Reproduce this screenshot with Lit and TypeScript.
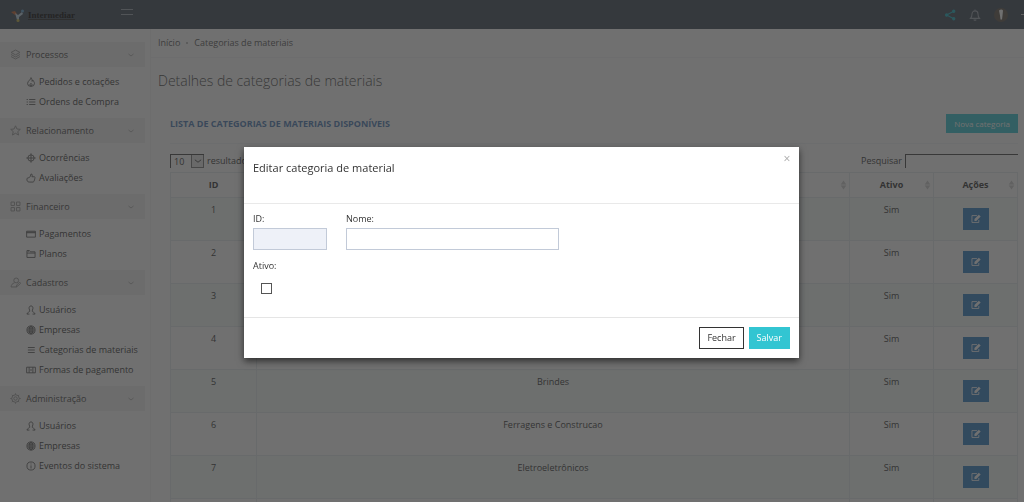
import { LitElement, html, svg, css, TemplateResult } from "lit";
import { customElement, property } from "lit/decorators.js";

const icons: Record<string, TemplateResult> = {
  layers: svg`<path d="M8 1.500 14.500 5 8 8.500 1.500 5z M1.500 8 8 11.500 14.500 8 M1.500 11 8 14.500 14.500 11"/>`,
  star: svg`<path d="M8 1.200 10.100 5.800 15 6.300 11.300 9.600 12.400 14.600 8 12 3.600 14.600 4.700 9.600 1 6.300 5.900 5.800z"/>`,
  grid: svg`<path d="M1.500 1.500h5v5h-5z M9.500 1.500h5v5h-5z M1.500 9.500h5v5h-5z M9.500 9.500h5v5h-5z"/>`,
  userEdit: svg`<circle cx="9" cy="5" r="3.500"/><path d="M6.500 8.500C3.500 9.500 2 11 1.500 14.500h8 M9 14.500l1-3 4-4 1.500 1.500-4 4z"/>`,
  gear: svg`<circle cx="8" cy="8" r="2.500"/><circle cx="8" cy="8" r="5.500"/><path d="M8 .5v2 M8 13.500v2 M.5 8h2 M13.500 8h2 M2.700 2.700l1.400 1.400 M11.900 11.900l1.400 1.400 M2.700 13.300l1.400-1.400 M11.900 4.100l1.400-1.400"/>`,
  fire: svg`<path d="M8 1c.5 3-5.500 5-5.500 9.500a5.500 4.500 0 0 0 11 0C13.500 8 12 7 11 5 10.500 6.500 10 7 9.500 7 10 5 9.500 3 8 1z M8 14.500c-2.500-1-2-3 0-4.500 2 1.500 2.500 3.500 0 4.500"/>`,
  list: svg`<path d="M1 4h2 M5 4h10 M1 8h2 M5 8h10 M1 12h2 M5 12h10"/>`,
  target: svg`<circle cx="8" cy="8" r="5"/><path d="M8 .5v15 M.5 8h15"/>`,
  like: svg`<path d="M4.500 7.500 7 5.500 8 1.500c2 0 2.500 2 1.500 4.500h4c1.500 1 1 2 .5 3-.5 2.500-1 5-2.500 5.500H6c-3 0-4-1-4.500-3.500s1-3.500 3-3.500z"/>`,
  card: svg`<path d="M1 3.500h14v9.500H1z M1 6h14"/><path d="M1 5h14"/>`,
  folder: svg`<path d="M1.500 13.500v-11h4l1.500 2h7.500v9z M3.500 4.500V2 M1.500 6.500h13"/>`,
  user: svg`<path d="M8 1.500c-2.500 0-3.500 2-3 4.500.3 2 1.300 2.500 1 4-.5 1.500-4 1.500-4.500 4.500h4 M8 1.500c2.500 0 3.500 2 3 4.500-.3 2-1.300 2.500-1 4 .5 1.500 4 1.500 4.500 4.500h-4"/>`,
  globe: svg`<circle cx="8" cy="8" r="6.500"/><ellipse cx="8" cy="8" rx="3" ry="6.500"/><path d="M1.500 8h13 M8 1.500v13 M2.500 5h11 M2.500 11h11"/>`,
  menu: svg`<path d="M3 4h11 M3 8h11 M3 12h11"/>`,
  cash: svg`<path d="M1 3.500h14v9H1z M5 3.500v9 M11 3.500v9 M8 6.500v3"/>`,
  info: svg`<circle cx="8" cy="8" r="6.500"/><path d="M8 7v5 M8 4v1.500"/>`,
  down: svg`<path d="M3 6l5 4 5-4"/>`,
  bell: svg`<path d="M2 12.500h12c-1.500-1.500-2-3-2-6a4 4 0 0 0-8 0c0 3-.5 4.500-2 6z M8 .800v1.700 M6.500 14c.5 1.500 2.500 1.500 3 0"/>`,
  share: svg`<path d="M13 3 3.500 8 13 13"/><circle cx="13" cy="3" r="1.500" fill="currentColor"/><circle cx="3.500" cy="8" r="1.500" fill="currentColor"/><circle cx="13" cy="13" r="1.500" fill="currentColor"/>`,
  edit: svg`<path d="M12.500 9.500v4h-11v-11h8"/><path fill="currentColor" stroke="none" d="M5.500 11V8L12.500 1l3 3-7 7z"/>`,
  sort: svg`<path fill="currentColor" stroke="none" d="M8 0l5 7H3z M8 16l5-7H3z"/>`,
};

@customElement("ui-icon")
class UiIcon extends LitElement {
  @property() name = "";
  static styles = css`
    :host { display: inline-flex; width: 10px; height: 10px; flex: none; }
    svg { width: 100%; height: 100%; fill: none; stroke: currentColor; stroke-width: 1.4; }
  `;
  render() {
    return html`<svg viewBox="0 0 16 16" aria-hidden="true">${icons[this.name]}</svg>`;
  }
}

const groups = [
  { icon: "layers", label: "Processos", items: [["fire", "Pedidos e cotações"], ["list", "Ordens de Compra"]] },
  { icon: "star", label: "Relacionamento", items: [["target", "Ocorrências"], ["like", "Avaliações"]] },
  { icon: "grid", label: "Financeiro", items: [["card", "Pagamentos"], ["folder", "Planos"]] },
  { icon: "userEdit", label: "Cadastros", items: [["user", "Usuários"], ["globe", "Empresas"], ["menu", "Categorias de materiais"], ["cash", "Formas de pagamento"]] },
  { icon: "gear", label: "Administração", items: [["user", "Usuários"], ["globe", "Empresas"], ["info", "Eventos do sistema"]] },
];

const rows = [
  [1, ""], [2, ""], [3, ""], [4, ""],
  [5, "Brindes"], [6, "Ferragens e Construcao"], [7, "Eletroeletrônicos"],
];

@customElement("app-root")
class AppRoot extends LitElement {
  static styles = css`
    :host { display: block; font-family: "Open Sans", sans-serif; font-size: 9px; line-height: 12px; color: #333; }
    * { box-sizing: border-box; }
    button, input, select { font: inherit; color: inherit; border-radius: 0; margin: 0; }
    a { color: inherit; text-decoration: none; }
    .page { height: 100vh; overflow: hidden; display: flex; flex-direction: column; background: #fff; }
    .top { height: 29px; flex: none; display: flex; align-items: center; background: #3b4655; padding-left: 10px; color: #98a0ab; }
    .brand { display: flex; align-items: center; gap: 3px; width: 111px; color: #000; padding-top: 2px; }
    .brand svg { width: 15px; height: 13px; }
    .words { display: flex; flex-direction: column; font-family: "Liberation Serif", serif; font-weight: bold; font-size: 9px; line-height: 8px; }
    .rule { height: 1px; background: #222; }
    .burger { width: 12px; height: 6px; padding: 0; background: none; border: solid #98a0ab; border-width: 1px 0; margin-bottom: 6px; }
    .tools { margin-left: auto; display: flex; align-items: center; gap: 13px; }
    .tools ui-icon { width: 12px; height: 12px; }
    .share { color: #18b0c0; }
    .avatar { width: 14px; height: 14px; }
    .caret { width: 3px; height: 1px; background: #ccc; }
    .body { flex: 1; min-height: 0; display: flex; }
    .side { width: 145px; flex: none; padding-top: 13px; }
    .group { display: flex; align-items: center; height: 25px; padding: 0 10px; gap: 5px; background: #f0f0f0; color: #444; }
    .group ui-icon { color: #999; width: 11px; height: 11px; }
    .group .chev { margin-left: auto; width: 8px; height: 8px; }
    .links { display: grid; grid-auto-rows: 20px; padding: 5px 0 6px 26px; }
    .links a { display: flex; align-items: center; gap: 3px; white-space: nowrap; }
    .links ui-icon { color: #555; }
    .main { flex: 1; min-width: 0; margin-left: 5px; border-left: 1px solid #f6f6f6; }
    .crumbs { height: 29px; display: flex; align-items: center; gap: 6px; padding: 0 7px; border-bottom: 1px solid #f4f6f8; color: #555; }
    .dot { width: 2px; height: 2px; background: #bbb; }
    h1 { margin: 0; padding: 11px 7px 0; font-size: 14px; line-height: 24px; font-weight: 300; color: #444; }
    .card { padding: 17px 6px 0 19px; }
    .cardhead { display: flex; align-items: flex-start; justify-content: space-between; padding-top: 4px; border-bottom: 1px solid #f1f4f8; height: 34px; }
    h2 { margin: 0; padding-top: 4px; font-size: 9px; line-height: 12px; font-weight: 700; color: #4a7ab5; text-transform: uppercase; }
    .new { height: 19px; border: 0; padding: 0 8px; background: #32c5d2; color: #fff; font-size: 8px; }
    .filter { display: flex; justify-content: space-between; height: 28px; padding-top: 10px; }
    .filter label { display: flex; align-items: center; gap: 3px; height: 14px; }
    .pick { display: grid; grid-template-columns: 20px 13px; height: 14px; border: solid #444; border-width: 1px 0 0 1px; }
    .pick select { grid-area: 1 / 1 / 2 / 3; appearance: none; border: 0; background: none; padding: 0 3px; width: 100%; }
    .pick span { grid-area: 1 / 2; display: grid; place-items: center; border: 1px solid #777; border-top: 0; background: #e8e8e8; pointer-events: none; }
    .filter input { width: 113px; height: 14px; border: solid #444; border-width: 1px 0 0 1px; background: none; outline: 0; }
    table { width: 100%; border-collapse: collapse; table-layout: fixed; text-align: center; }
    th, td { border: 1px solid #e3eaee; padding: 0; }
    th { height: 25px; font-weight: 700; }
    .th { display: grid; grid-template-columns: 10px 1fr 10px; align-items: center; }
    .th span { grid-column: 2; }
    .th ui-icon { width: 9px; color: #ccc; }
    td { height: 43px; vertical-align: top; padding-top: 6px; }
    tbody tr:nth-child(odd) { background: #f5fbf9; }
    .act { vertical-align: middle; padding: 0; }
    .edit { display: inline-grid; place-items: center; width: 26px; height: 22px; border: 0; padding: 0; background: #2f7fc4; color: #fff; vertical-align: middle; }
    .c1 { width: 86px; } .c3 { width: 84px; } .c4 { width: 84px; }
    .shade { position: fixed; inset: 0; background: rgba(51, 51, 51, 0.7); display: flex; justify-content: center; align-items: flex-start; padding: 147px 0 0 19px; }
    .modal { width: 555px; max-width: 100%; background: #fff; box-shadow: 0 3px 7px rgba(0, 0, 0, 0.6); color: #333; }
    .mhead { display: flex; justify-content: space-between; align-items: flex-start; height: 57px; padding: 6px 8px 0 9px; border-bottom: 1px solid #e9e9e9; }
    .mhead h3 { margin: 0; padding-top: 7px; font-size: 11px; line-height: 16px; font-weight: 400; }
    .x { border: 0; padding: 0; width: 8px; height: 12px; background: none; color: #aaa; font-size: 12px; line-height: 12px; }
    .form { display: grid; grid-template-columns: 74px 213px; column-gap: 19px; padding: 9px; height: 113px; align-content: start; }
    .field { display: flex; flex-direction: column; gap: 3px; }
    .field input[type="text"] { height: 22px; width: 100%; border: 1px solid #c2cad8; padding: 0 6px; outline: 0; background: #fff; }
    .field input[readonly] { background: #eef1f8 !important; }
    .field.second { padding-top: 10px; gap: 11px; }
    .check { appearance: none; width: 11px; height: 11px; border: 1px solid #555; background: #fff; margin-left: 8px; }
    .mfoot { display: flex; justify-content: flex-end; gap: 5px; padding: 9px; border-top: 1px solid #e5e5e5; }
    .btn { height: 22px; padding: 0 7px; border: 1px solid #32c5d2; background: #32c5d2; color: #fff; }
    .btn.plain { background: #fff; border-color: #333; color: #333; }
  `;

  render() {
    return html`
      <div class="page">
        <header class="top">
          <a class="brand" href="#">
            <svg viewBox="0 0 15 13" aria-hidden="true">
              <path d="M1 3l4-1 2 3-2 1z" fill="#c8602a"/><path d="M5 4l3 2 4-3 1 2-4 3v4l-2-1z" fill="#b8cfe0"/>
              <circle cx="12.500" cy="2" r="1.500" fill="#5fa0d0"/><circle cx="8" cy="11.500" r="1.500" fill="#c0b040"/>
            </svg>
            <span class="words">Intermediar<span class="rule"></span></span>
          </a>
          <button class="burger" aria-label="Menu"></button>
          <div class="tools">
            <ui-icon class="share" name="share"></ui-icon>
            <ui-icon name="bell"></ui-icon>
            <svg class="avatar" viewBox="0 0 14 14" aria-hidden="true">
              <circle cx="7" cy="7" r="7" fill="#5a5348"/><path d="M5 2.500q2.500-2 4 0l-.5 5-.5 4h-1.500l-.5-4z" fill="#fff"/>
            </svg>
            <span class="caret"></span>
          </div>
        </header>
        <div class="body">
          <nav class="side">
            ${groups.map((g) => html`
              <div class="group"><ui-icon name=${g.icon}></ui-icon>${g.label}<ui-icon class="chev" name="down"></ui-icon></div>
              <div class="links">${g.items.map(([i, t]) => html`<a href="#"><ui-icon name=${i}></ui-icon>${t}</a>`)}</div>
            `)}
          </nav>
          <main class="main">
            <div class="crumbs"><a href="#">Início</a><span class="dot"></span><span>Categorias de materiais</span></div>
            <h1>Detalhes de categorias de materiais</h1>
            <section class="card">
              <div class="cardhead"><h2>Lista de categorias de materiais disponíveis</h2><button class="new">Nova categoria</button></div>
              <div class="filter">
                <label><span class="pick"><select><option>10</option></select><span><ui-icon name="down"></ui-icon></span></span>resultados</label>
                <label>Pesquisar<input type="search"></label>
              </div>
              <table>
                <colgroup><col class="c1"><col><col class="c3"><col class="c4"></colgroup>
                <thead><tr>
                  ${["ID", "Nome", "Ativo", "Ações"].map((t) => html`<th><div class="th"><span>${t}</span>${t === "ID" ? "" : html`<ui-icon name="sort"></ui-icon>`}</div></th>`)}
                </tr></thead>
                <tbody>
                  ${rows.map(([id, name]) => html`<tr><td>${id}</td><td>${name}</td><td>Sim</td>
                    <td class="act"><button class="edit" aria-label="Editar"><ui-icon name="edit"></ui-icon></button></td></tr>`)}
                  <tr><td></td><td></td><td></td><td></td></tr>
                </tbody>
              </table>
            </section>
          </main>
        </div>
      </div>
      <div class="shade">
        <div class="modal" role="dialog" aria-modal="true" aria-labelledby="title">
          <div class="mhead"><h3 id="title">Editar categoria de material</h3><button class="x" aria-label="Fechar">×</button></div>
          <div class="form">
            <div class="field"><label for="cid">ID:</label><input id="cid" type="text" readonly></div>
            <div class="field"><label for="nome">Nome:</label><input id="nome" type="text"></div>
            <div class="field second"><label for="ativo">Ativo:</label><input id="ativo" class="check" type="checkbox"></div>
          </div>
          <div class="mfoot"><button class="btn plain">Fechar</button><button class="btn">Salvar</button></div>
        </div>
      </div>
    `;
  }
}
